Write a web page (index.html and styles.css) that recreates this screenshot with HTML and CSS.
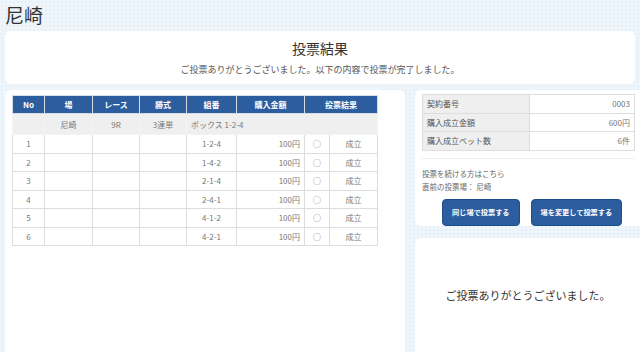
FILE: index.html
```html
<html>
<head>
<meta charset="utf-8">
<link rel="stylesheet" href="styles.css">
</head>
<body>

<h1 class="place">尼崎</h1>

<!-- 結果見出し -->
<div class="card head-card">
<h2>投票結果</h2>
<p>ご投票ありがとうございました。以下の内容で投票が完了しました。</p>
</div>

<div class="cols">
<div class="card left-card">
<table class="result">
<colgroup>
<col class="c-no"><col class="c-jo"><col class="c-race"><col class="c-shiki">
<col class="c-kumi"><col class="c-kin"><col class="c-mark"><col class="c-stat">
</colgroup>
<tr>
<th>No</th>
<th>場</th>
<th>レース</th>
<th>勝式</th>
<th>組番</th>
<th>購入金額</th>
<th colspan="2">投票結果</th>
</tr>
<tr class="sub">
<td></td>
<td>尼崎</td>
<td>9R</td>
<td>3連単</td>
<td colspan="4" class="left">ボックス 1-2-4</td>
</tr>
<tr><td>1</td><td></td><td></td><td></td><td>1-2-4</td><td class="right">100円</td><td>○</td><td>成立</td></tr>
<tr><td>2</td><td></td><td></td><td></td><td>1-4-2</td><td class="right">100円</td><td>○</td><td>成立</td></tr>
<tr><td>3</td><td></td><td></td><td></td><td>2-1-4</td><td class="right">100円</td><td>○</td><td>成立</td></tr>
<tr><td>4</td><td></td><td></td><td></td><td>2-4-1</td><td class="right">100円</td><td>○</td><td>成立</td></tr>
<tr><td>5</td><td></td><td></td><td></td><td>4-1-2</td><td class="right">100円</td><td>○</td><td>成立</td></tr>
<tr><td>6</td><td></td><td></td><td></td><td>4-2-1</td><td class="right">100円</td><td>○</td><td>成立</td></tr>
</table>
</div>

<div class="right-col">
<div class="card info-card">
<table class="summary">
<tr><th>契約番号</th><td>0003</td></tr>
<tr><th>購入成立金額</th><td>600円</td></tr>
<tr><th>購入成立ベット数</th><td>6件</td></tr>
</table>
<div class="next">
<p>投票を続ける方はこちら</p>
<p>直前の投票場： 尼崎</p>
</div>
<div class="btns">
<button class="btn">同じ場で投票する</button>
<button class="btn">場を変更して投票する</button>
</div>
</div>
<div class="card thanks-card">
<p>ご投票ありがとうございました。</p>
</div>
</div>
</div>

</body>
</html>
```

FILE: styles.css
```css
html, body {
margin: 0;
height: 100%;
overflow: hidden;
}
body {
font-family: "Noto Sans CJK JP", "Noto Sans", sans-serif;
color: #333;
padding: 0 5px;
background-color: #eef5fb;
background-image: radial-gradient(#dbe7f3 0.6px, transparent 0.8px);
background-size: 4px 4px;
}
.place {
font-size: 19px;
font-weight: 400;
margin: 0;
height: 31px;
line-height: 29px;
color: #333;
}
.card {
background: #fff;
border-radius: 6px;
}
.head-card {
height: 53px;
width: 630px;
text-align: center;
padding-top: 8px;
box-sizing: border-box;
}
.head-card h2 {
font-size: 14px;
font-weight: 400;
margin: 0;
line-height: 18px;
}
.head-card p {
font-size: 9px;
color: #555;
margin: 6px 0 0;
}
.cols {
display: grid;
grid-template-columns: 400px 232px;
gap: 10px;
margin-top: 6px;
}
.left-card {
height: 270px;
padding: 5px 7px;
box-sizing: border-box;
}
table {
border-collapse: collapse;
font-size: 8px;
color: #777;
}
.result {
width: 365px;
table-layout: fixed;
}
.result th {
background: #2c5d9f;
color: #fff;
border: 1px solid #d8dde5;
height: 18px;
padding: 0;
font-weight: bold;
}
.result td {
border: 1px solid #ddd;
height: 18.5px;
padding: 0;
text-align: center;
}
.result tr.sub td {
background: #efefef;
height: 21px;
border-color: #f4f4f4;
}
.result td.left {
text-align: left;
padding-left: 4px;
}
.result td.right {
text-align: right;
padding-right: 4px;
}
.c-no { width: 32px; }
.c-jo { width: 48px; }
.c-race { width: 47px; }
.c-shiki { width: 47px; }
.c-kumi { width: 50px; }
.c-kin { width: 68px; }
.c-mark { width: 25px; }
.c-stat { width: 48px; }
.right-col {
display: flex;
flex-direction: column;
gap: 12px;
}
.info-card {
height: 136px;
padding: 4px 7px 0;
box-sizing: border-box;
}
.summary {
width: 213px;
border: 1px solid #ddd;
}
.summary th {
background: #efefef;
text-align: left;
font-weight: normal;
color: #555;
width: 98px;
padding: 0 4px;
border: 1px solid #ddd;
height: 18.5px;
}
.summary td {
text-align: right;
padding: 0 4px;
border: 1px solid #ddd;
}
.next {
border-top: 1px solid #eee;
margin-top: 7px;
padding-top: 8px;
width: 213px;
}
.next p {
font-size: 7.5px;
color: #666;
margin: 0;
line-height: 13px;
}
.btns {
display: flex;
gap: 11px;
padding-left: 20px;
margin-top: 6px;
}
.btn {
background: #2c5d9f;
border: 1px solid #1f4c8a;
color: #fff;
border-radius: 4px;
font-family: inherit;
font-size: 7.2px;
font-weight: bold;
height: 27px;
padding: 0 9px;
}
.thanks-card {
height: 120px;
display: flex;
align-items: center;
justify-content: center;
}
.thanks-card p {
font-size: 11px;
margin: 0 0 6px;
color: #333;
padding-right: 6px;
}
```
